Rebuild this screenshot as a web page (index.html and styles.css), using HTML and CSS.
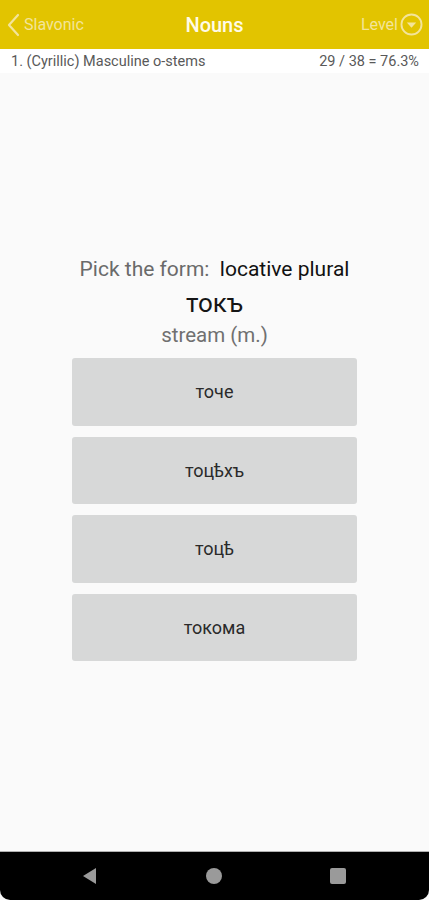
FILE: index.html
```html
<!DOCTYPE html>
<html lang="en">
<head>
  <meta charset="UTF-8" />
  <meta name="viewport" content="width=device-width, initial-scale=1" />
  <title>Nouns</title>
  <link rel="stylesheet" href="styles.css">
</head>
<body>
  <div class="app">
    <header class="topo">
      <div class="voltar">
        <svg width="14" height="24" viewBox="0 0 14 24"><path d="M12 2 L3 12 L12 22" fill="none" stroke="#f3e49a" stroke-width="2.2" stroke-linecap="round" stroke-linejoin="round"/></svg>
        <span>Slavonic</span>
      </div>
      <h1>Nouns</h1>
      <div class="nivel">
        <span>Level</span>
        <svg width="23" height="23" viewBox="0 0 22 22"><circle cx="11" cy="11" r="9.6" fill="none" stroke="#f3e49a" stroke-width="1.8"/><path d="M6.5 9 L15.5 9 L11 14 Z" fill="#f3e49a"/></svg>
      </div>
    </header>

    <div class="sub">
      <span>1. (Cyrillic) Masculine o-stems</span>
      <span>29 / 38 = 76.3%</span>
    </div>

    <main class="quiz">
      <p class="pergunta">Pick the form:&nbsp; <b>locative plural</b></p>
      <p class="palavra">токъ</p>
      <p class="sentido">stream (m.)</p>

      <div class="opcoes">
        <div class="opcao">точе</div>
        <div class="opcao">тоцѣхъ</div>
        <div class="opcao">тоцѣ</div>
        <div class="opcao">токома</div>
      </div>
    </main>

    <nav class="sistema">
      <svg width="18" height="18" viewBox="0 0 18 18"><path d="M15 1 L15 17 L2 9 Z" fill="#9a9a9a"/></svg>
      <svg width="18" height="18" viewBox="0 0 18 18"><circle cx="9" cy="9" r="8" fill="#9a9a9a"/></svg>
      <svg width="18" height="18" viewBox="0 0 18 18"><rect x="1" y="1" width="16" height="16" rx="2" fill="#9a9a9a"/></svg>
    </nav>
  </div>
</body>
</html>
```

FILE: styles.css
```css
:root {
  --amarelo: #e2c400;
  --claro: #f3e49a;
  --fundo: #fafafa;
  --botao: #d7d8d8;
}

body {
  margin: 0;
  font-family: Roboto, "Noto Sans", sans-serif;
  background: #ffffff;
}

.app {
  width: 429px;
  height: 900px;
  display: flex;
  flex-direction: column;
  background: var(--fundo);
}

.topo {
  height: 49px;
  background: var(--amarelo);
  display: flex;
  align-items: center;
  justify-content: space-between;
  padding: 0 6px 0 6px;
  flex-shrink: 0;
}

.voltar {
  display: flex;
  align-items: center;
  gap: 4px;
  color: var(--claro);
  font-size: 16px;
  width: 110px;
}

.topo h1 {
  margin: 0;
  font-size: 20px;
  font-weight: 500;
  color: #fffbe8;
}

.nivel {
  display: flex;
  align-items: center;
  justify-content: flex-end;
  gap: 2px;
  color: var(--claro);
  font-size: 16px;
  width: 110px;
}

.sub {
  height: 24px;
  display: flex;
  align-items: center;
  justify-content: space-between;
  padding: 0 10px 0 11px;
  font-size: 14.5px;
  color: #595959;
  background: #ffffff;
}

.quiz {
  flex: 1;
  display: flex;
  flex-direction: column;
  align-items: center;
  padding-top: 182px;
}

.quiz p {
  margin: 0;
}

.pergunta {
  font-size: 21px;
  color: #6a6a6a;
  line-height: 28px;
}

.pergunta b {
  font-weight: 400;
  color: #111;
}

.palavra {
  font-size: 26px;
  font-weight: 400;
  color: #151515;
  line-height: 32px;
  margin-top: 4px !important;
}

.sentido {
  font-size: 20.5px;
  color: #707070;
  line-height: 28px;
  margin-top: 2px !important;
}

.opcoes {
  margin-top: 9px;
  display: flex;
  flex-direction: column;
  gap: 11px;
}

.opcao {
  width: 285px;
  height: 67.5px;
  background: var(--botao);
  border-radius: 3px;
  display: flex;
  align-items: center;
  justify-content: center;
  font-size: 18px;
  color: #2a2a2a;
}

.sistema {
  height: 48px;
  flex-shrink: 0;
  background: #000;
  border-top: 1px solid #b0b0b0;
  border-radius: 0 0 10px 10px;
  display: flex;
  align-items: center;
  justify-content: space-between;
  padding: 0 82px 0 81px;
}
```
